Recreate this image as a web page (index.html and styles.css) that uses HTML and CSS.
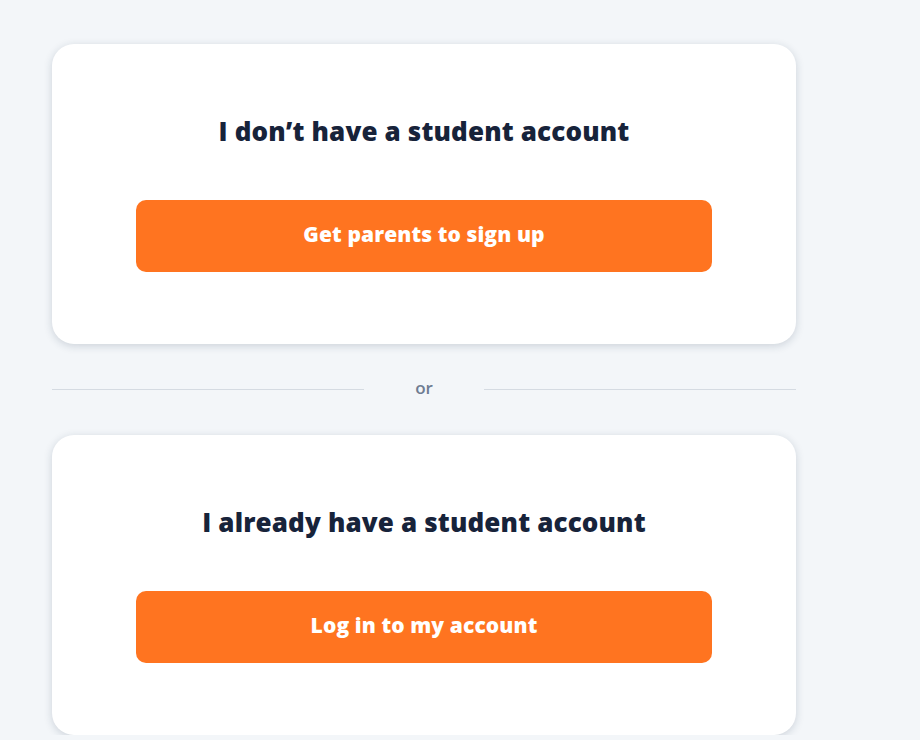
FILE: index.html
```html
<!DOCTYPE html>
<html>
<head>
<meta charset="utf-8">
<link rel="stylesheet" href="styles.css">
</head>
<body>
<div class="wrap">
  <div class="card">
    <h2 class="title">I don’t have a student account</h2>
    <button class="btn">Get parents to sign up</button>
  </div>
  <div class="divider">
    <span class="line"></span>
    <span class="or">or</span>
    <span class="line"></span>
  </div>
  <div class="card">
    <h2 class="title">I already have a student account</h2>
    <button class="btn">Log in to my account</button>
  </div>
</div>
</body>
</html>
```
FILE: styles.css
```css
html, body {
  margin: 0;
  padding: 0;
  background: #f3f6f9;
}
body {
  font-family: "Open Sans", "Noto Sans", sans-serif;
}
.wrap {
  width: 744px;
  padding: 44px 0 0 52px;
}
.card {
  background: #fff;
  border-radius: 22px;
  box-shadow: 0 2px 8px rgba(30, 50, 80, 0.18);
  height: 300px;
  box-sizing: border-box;
  padding-top: 71px;
  display: flex;
  flex-direction: column;
  align-items: center;
}
.title {
  margin: 0;
  font-size: 26px;
  line-height: 32px;
  font-weight: 800;
  color: #17233a;
  letter-spacing: 0.15px;
}
.btn {
  margin-top: 53px;
  width: 576px;
  height: 72px;
  padding: 0 0 4px;
  border: none;
  border-radius: 10px;
  background: #ff7420;
  color: #fff;
  font-family: "Open Sans", "Noto Sans", sans-serif;
  font-weight: 800;
  font-size: 21px;
  letter-spacing: 0.1px;
  cursor: pointer;
}
.divider {
  height: 91px;
  display: flex;
  align-items: center;
}
.line {
  flex: 1;
  height: 1px;
  background: #d5dbe2;
}
.or {
  width: 120px;
  text-align: center;
  color: #6e7c92;
  font-size: 17px;
  font-weight: 600;
  position: relative;
  top: -2px;
}
```
